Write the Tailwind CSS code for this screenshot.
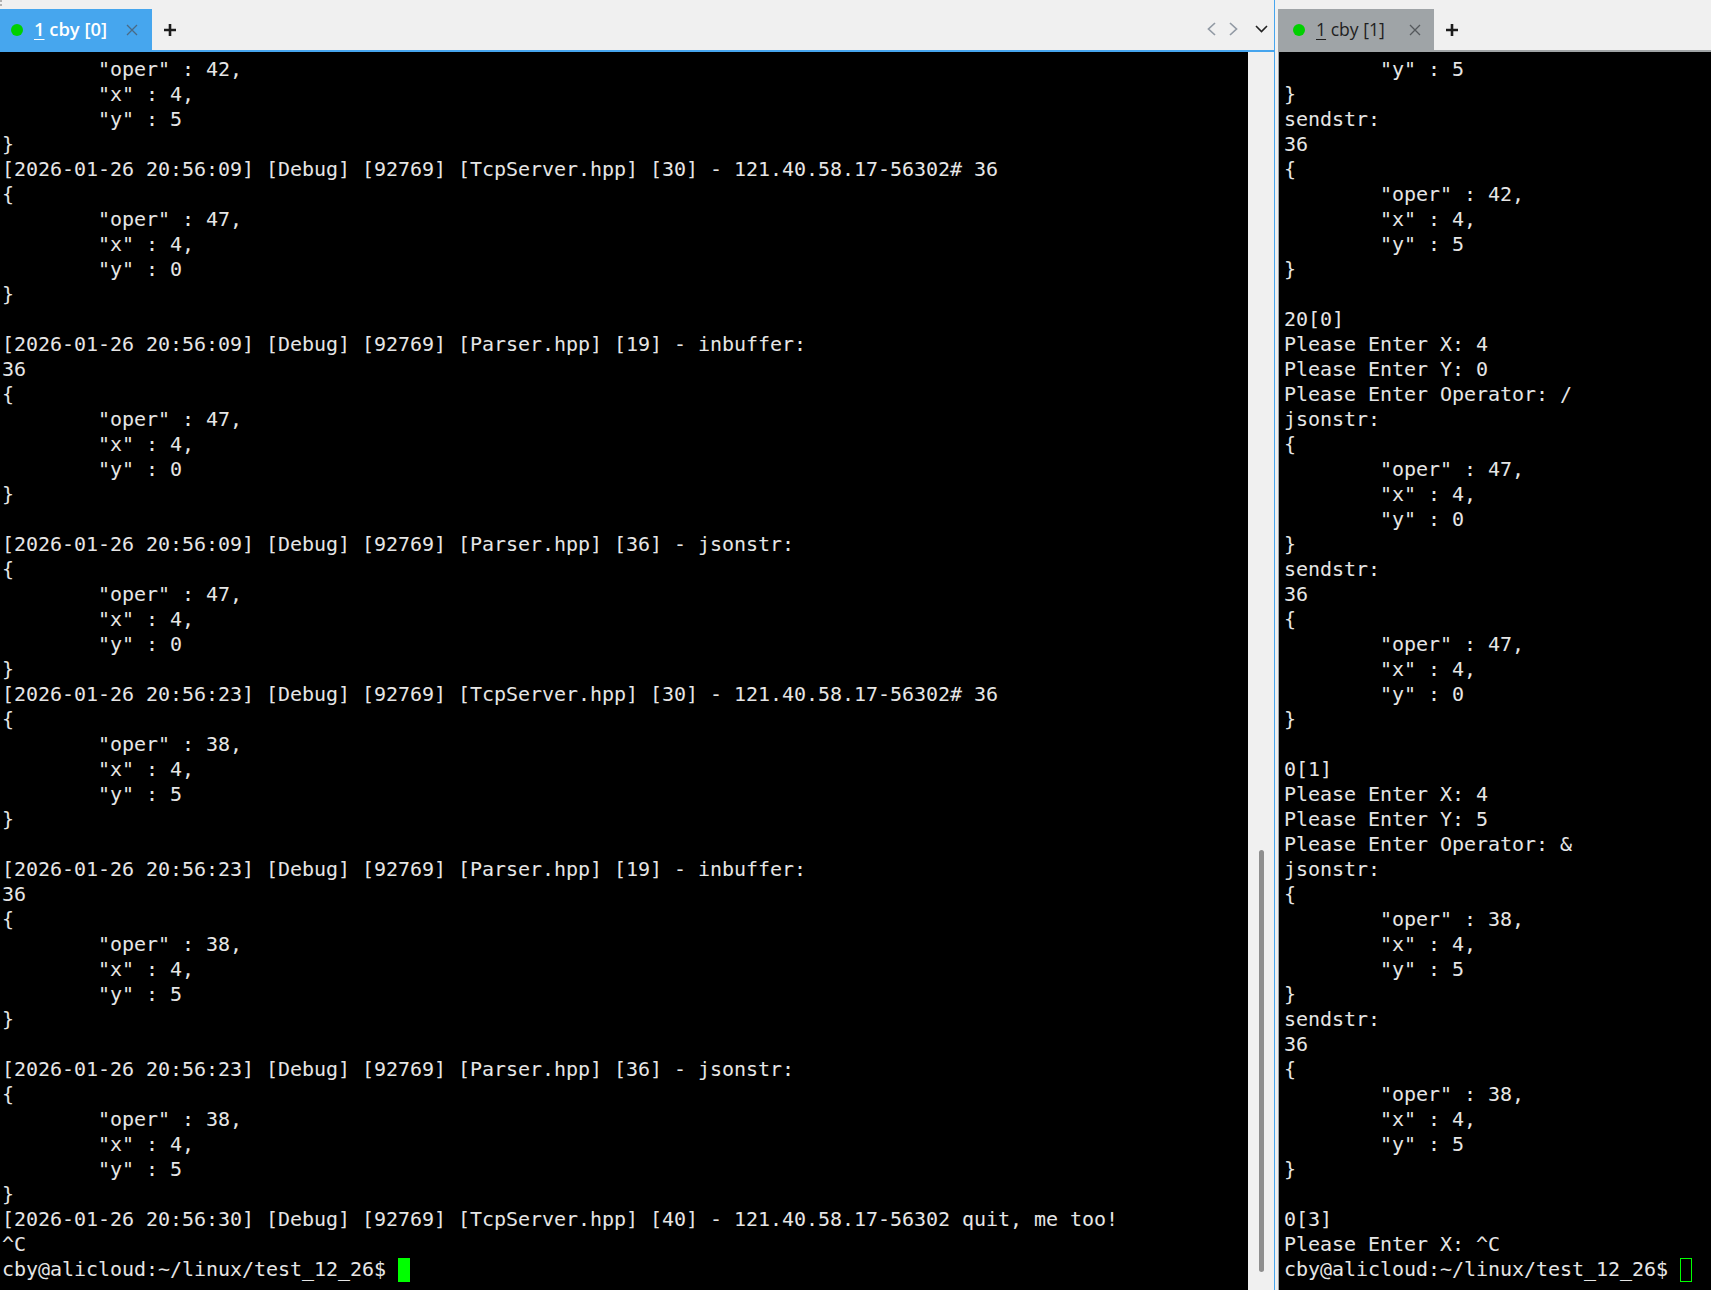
<!DOCTYPE html>
<html lang="en">
<head>
<meta charset="UTF-8">
<title>cby terminal</title>
<script src="https://cdn.jsdelivr.net/npm/@tailwindcss/browser@4"></script>
</head>
<body class="bg-[#f0f0f0] overflow-hidden">
<div class="relative flex h-[1290px] w-[1711px]">
  <!-- window grip dots in the corner -->
  <div class="absolute left-0 top-0 flex flex-col gap-[2px]">
    <span class="w-[2px] h-[2px] bg-[#b0b0b0]"></span>
    <span class="w-[2px] h-[2px] bg-[#b0b0b0]"></span>
  </div>
  <!-- left pane -->
  <div class="w-[1275px] shrink-0 flex flex-col border-r border-[#46a5ee]">
    <div class="h-[52px] shrink-0 flex items-end border-b-2 border-[#46a5ee] bg-[#f0f0f0]">
      <div class="w-[152px] h-[41px] bg-[#46a6ee] flex items-center pl-[11px] font-['Open_Sans',sans-serif]">
        <span class="w-3 h-3 rounded-full bg-[#00d000]"></span>
        <span class="ml-[11px] text-[18.4px] font-semibold text-white leading-none"><span class="underline underline-offset-[3px]">1</span> cby [0]</span>
        <svg class="ml-[19px] w-3 h-3" viewBox="0 0 12 12" fill="none" stroke="#4a6a85" stroke-width="1.3"><path d="M1 1l10 10M11 1L1 11"/></svg>
      </div>
      <svg class="ml-[12px] mb-[14px] w-[12px] h-[12px]" viewBox="0 0 12 12" fill="none" stroke="#1c1c1c" stroke-width="2.6"><path d="M6 0v12M0 6h12"/></svg>
      <div class="ml-auto flex items-center mb-[14px]">
        <svg class="w-[9px] h-[14px]" viewBox="0 0 9 14" fill="none" stroke="#929aa4" stroke-width="1.7"><path d="M8 1L1.500 7 8 13"/></svg>
        <svg class="ml-[13px] w-[9px] h-[14px]" viewBox="0 0 9 14" fill="none" stroke="#929aa4" stroke-width="1.7"><path d="M1 1l6.500 6L1 13"/></svg>
        <svg class="ml-[17px] mr-[6px] w-[13px] h-[8px]" viewBox="0 0 13 8" fill="none" stroke="#222" stroke-width="1.6"><path d="M1 1l5.500 5.500L12 1"/></svg>
      </div>
    </div>
    <div class="flex-1 flex min-h-0">
      <pre class="w-[1248px] shrink-0 bg-black overflow-hidden pl-[2px] pt-[5px] font-['DejaVu_Sans_Mono',monospace] text-[20px] tracking-[-0.04px] leading-[25px] text-[#e6e6e6]">        "oper" : 42,
        "x" : 4,
        "y" : 5
}
[2026-01-26 20:56:09] [Debug] [92769] [TcpServer.hpp] [30] - 121.40.58.17-56302# 36
{
        "oper" : 47,
        "x" : 4,
        "y" : 0
}

[2026-01-26 20:56:09] [Debug] [92769] [Parser.hpp] [19] - inbuffer:
36
{
        "oper" : 47,
        "x" : 4,
        "y" : 0
}

[2026-01-26 20:56:09] [Debug] [92769] [Parser.hpp] [36] - jsonstr:
{
        "oper" : 47,
        "x" : 4,
        "y" : 0
}
[2026-01-26 20:56:23] [Debug] [92769] [TcpServer.hpp] [30] - 121.40.58.17-56302# 36
{
        "oper" : 38,
        "x" : 4,
        "y" : 5
}

[2026-01-26 20:56:23] [Debug] [92769] [Parser.hpp] [19] - inbuffer:
36
{
        "oper" : 38,
        "x" : 4,
        "y" : 5
}

[2026-01-26 20:56:23] [Debug] [92769] [Parser.hpp] [36] - jsonstr:
{
        "oper" : 38,
        "x" : 4,
        "y" : 5
}
[2026-01-26 20:56:30] [Debug] [92769] [TcpServer.hpp] [40] - 121.40.58.17-56302 quit, me too!
^C
cby@alicloud:~/linux/test_12_26$ <span class="inline-block align-top mt-[1px] w-[12px] h-[24px] bg-[#00ff00]"></span></pre>
      <div class="flex-1 relative bg-[#f0f0f0]">
        <div class="absolute left-[11px] top-[798px] bottom-[18px] w-[5px] rounded-full bg-[#8e8e8e]"></div>
      </div>
    </div>
  </div>
  <!-- right pane -->
  <div class="flex-1 min-w-0 flex flex-col ml-[3px]">
    <div class="h-[52px] shrink-0 flex items-end border-b-2 border-[#a0a4a6] bg-[#f0f0f0]">
      <div class="w-[156px] h-[41px] bg-[#9fa4a7] flex items-center pl-[15px] font-['Open_Sans',sans-serif]">
        <span class="w-3 h-3 rounded-full bg-[#00d000]"></span>
        <span class="ml-[11px] text-[17.6px] text-[#1f1f1f] leading-none"><span class="underline underline-offset-[3px]">1</span> cby [1]</span>
        <svg class="ml-[24px] w-3 h-3" viewBox="0 0 12 12" fill="none" stroke="#55595c" stroke-width="1.3"><path d="M1 1l10 10M11 1L1 11"/></svg>
      </div>
      <svg class="ml-[12px] mb-[14px] w-[12px] h-[12px]" viewBox="0 0 12 12" fill="none" stroke="#1c1c1c" stroke-width="2.6"><path d="M6 0v12M0 6h12"/></svg>
    </div>
    <pre class="flex-1 min-h-0 bg-black border-l border-[#a0a4a6] overflow-hidden pl-[5px] pt-[5px] font-['DejaVu_Sans_Mono',monospace] text-[20px] tracking-[-0.04px] leading-[25px] text-[#e6e6e6]">        "y" : 5
}
sendstr:
36
{
        "oper" : 42,
        "x" : 4,
        "y" : 5
}

20[0]
Please Enter X: 4
Please Enter Y: 0
Please Enter Operator: /
jsonstr:
{
        "oper" : 47,
        "x" : 4,
        "y" : 0
}
sendstr:
36
{
        "oper" : 47,
        "x" : 4,
        "y" : 0
}

0[1]
Please Enter X: 4
Please Enter Y: 5
Please Enter Operator: &amp;
jsonstr:
{
        "oper" : 38,
        "x" : 4,
        "y" : 5
}
sendstr:
36
{
        "oper" : 38,
        "x" : 4,
        "y" : 5
}

0[3]
Please Enter X: ^C
cby@alicloud:~/linux/test_12_26$ <span class="inline-block align-top mt-[1px] w-[12px] h-[24px] border border-[#00ff00]"></span></pre>
  </div>
</div>
</body>
</html>
